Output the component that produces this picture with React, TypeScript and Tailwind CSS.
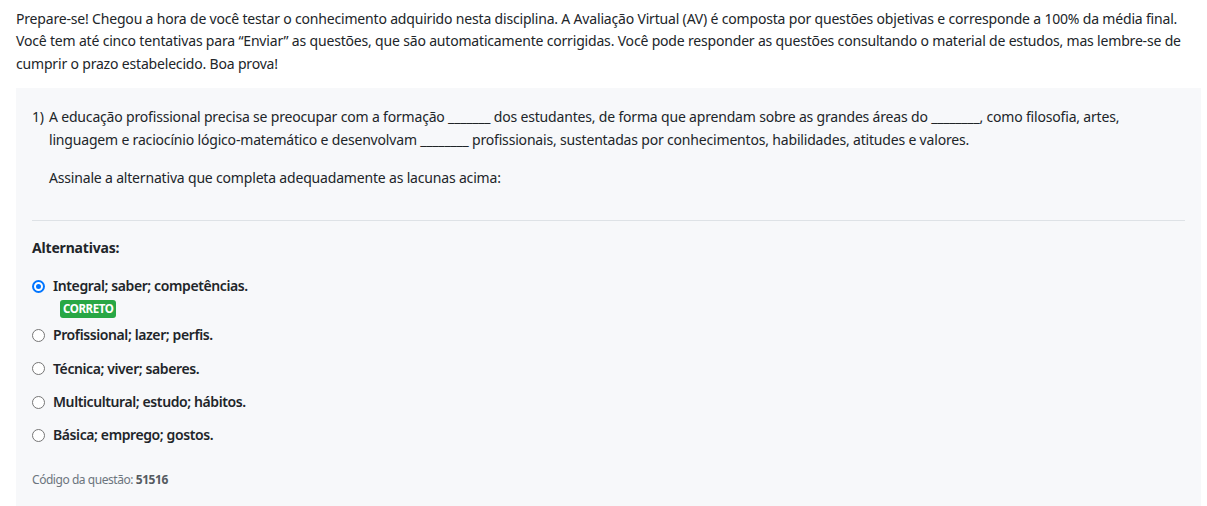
const options = [
  { text: 'Integral; saber; competências.', checked: true, correct: true },
  { text: 'Profissional; lazer; perfis.' },
  { text: 'Técnica; viver; saberes.' },
  { text: 'Multicultural; estudo; hábitos.' },
  { text: 'Básica; emprego; gostos.' },
];

function Radio({ checked }: { checked?: boolean }) {
  return checked ? (
    <span className="w-[13px] h-[13px] rounded-full bg-[#0075ff] flex items-center justify-center shrink-0">
      <span className="w-[9px] h-[9px] rounded-full border-2 border-white bg-[#0075ff]" />
    </span>
  ) : (
    <span className="w-[13px] h-[13px] rounded-full border border-[#767676] bg-white shrink-0" />
  );
}

export default function App() {
  return (
    <div className="bg-white text-[#212529] text-[14px] leading-[22.4px] tracking-[-0.18px] font-['Noto_Sans',sans-serif] pl-4 pr-[6px] pt-2 min-h-[506px]">
      <p className="mb-[13px] pr-[10px]">
        Prepare-se! Chegou a hora de você testar o conhecimento adquirido nesta disciplina. A Avaliação Virtual (AV) é composta por questões objetivas e corresponde a 100% da média final. Você tem até cinco tentativas para “Enviar” as questões, que são automaticamente corrigidas. Você pode responder as questões consultando o material de estudos, mas lembre-se de cumprir o prazo estabelecido. Boa prova!
      </p>

      <div className="bg-[#f7f8fa] px-4 pt-[18px] pb-6">
        <div className="flex">
          <span className="w-[17px] shrink-0">1)</span>
          <div>
            <p>
              A educação profissional precisa se preocupar com a formação _______ dos estudantes, de forma que aprendam sobre as grandes áreas do ________, como filosofia, artes, linguagem e raciocínio lógico-matemático e desenvolvam ________ profissionais, sustentadas por conhecimentos, habilidades, atitudes e valores.
            </p>
            <p className="mt-4">Assinale a alternativa que completa adequadamente as lacunas acima:</p>
          </div>
        </div>

        <hr className="border-0 border-t border-[#dee2e6] mt-[31px] mb-4" />

        <p className="font-bold">Alternativas:</p>

        <ul className="mt-[15px] flex flex-col gap-[11px]">
          {options.map((o) => (
            <li key={o.text}>
              <label className="flex items-center gap-2 font-semibold tracking-[-0.4px]">
                <Radio checked={o.checked} />
                <span>{o.text}</span>
              </label>
              {o.correct && (
                <span className="ml-7 mt-[3px] mb-[-5px] block w-fit bg-[#28a745] text-white text-[11.5px] leading-[18px] font-bold px-[3px] rounded-[3px] tracking-[-0.4px]">
                  CORRETO
                </span>
              )}
            </li>
          ))}
        </ul>

        <p className="mt-[22px] text-[12px] text-[#6c757d] tracking-[-0.45px]">
          Código da questão: <span className="font-bold text-[#555b61]">51516</span>
        </p>
      </div>
    </div>
  );
}
